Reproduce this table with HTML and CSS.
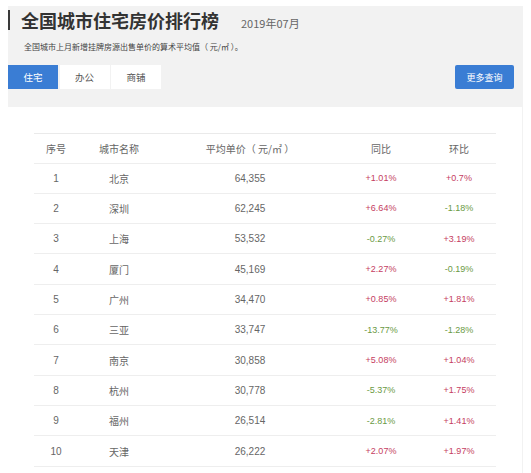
FILE: index.html
```html
<!DOCTYPE html>
<html lang="zh-CN">
<head>
<meta charset="utf-8">
<title>全国城市住宅房价排行榜</title>
<link rel="stylesheet" href="styles.css">
</head>
<body>
<div class="page">
  <div class="head">
    <h1 class="title">全国城市住宅房价排行榜</h1>
    <span class="date">2019年07月</span>
  </div>
  <p class="sub">全国城市上月新增挂牌房源出售单价的算术平均值（ 元/㎡ ）。</p>
  <div class="toolbar">
    <div class="tabs">
      <span class="tab active">住宅</span>
      <span class="tab">办公</span>
      <span class="tab">商铺</span>
    </div>
    <span class="more">更多查询</span>
  </div>
  <div class="card">
    <div class="table">
      <div class="row hdr"><span>序号</span><span>城市名称</span><span>平均单价（ 元/㎡ ）</span><span>同比</span><span>环比</span></div>
      <div class="row"><span class="num">1</span><span>北京</span><span class="num">64,355</span><span class="pct up">+1.01%</span><span class="pct up">+0.7%</span></div>
      <div class="row"><span class="num">2</span><span>深圳</span><span class="num">62,245</span><span class="pct up">+6.64%</span><span class="pct down">-1.18%</span></div>
      <div class="row"><span class="num">3</span><span>上海</span><span class="num">53,532</span><span class="pct down">-0.27%</span><span class="pct up">+3.19%</span></div>
      <div class="row"><span class="num">4</span><span>厦门</span><span class="num">45,169</span><span class="pct up">+2.27%</span><span class="pct down">-0.19%</span></div>
      <div class="row"><span class="num">5</span><span>广州</span><span class="num">34,470</span><span class="pct up">+0.85%</span><span class="pct up">+1.81%</span></div>
      <div class="row"><span class="num">6</span><span>三亚</span><span class="num">33,747</span><span class="pct down">-13.77%</span><span class="pct down">-1.28%</span></div>
      <div class="row"><span class="num">7</span><span>南京</span><span class="num">30,858</span><span class="pct up">+5.08%</span><span class="pct up">+1.04%</span></div>
      <div class="row"><span class="num">8</span><span>杭州</span><span class="num">30,778</span><span class="pct down">-5.37%</span><span class="pct up">+1.75%</span></div>
      <div class="row"><span class="num">9</span><span>福州</span><span class="num">26,514</span><span class="pct down">-2.81%</span><span class="pct up">+1.41%</span></div>
      <div class="row"><span class="num">10</span><span>天津</span><span class="num">26,222</span><span class="pct up">+2.07%</span><span class="pct up">+1.97%</span></div>
    </div>
  </div>
</div>
</body>
</html>
```
FILE: styles.css
```css
* { box-sizing: border-box; }
html, body { margin: 0; padding: 0; background: #fff; }
body {
  font-family: "Noto Sans CJK SC", "Liberation Sans", sans-serif;
  color: #333;
  overflow: hidden;
  height: 473px;
}
.page {
  margin: 6px 0 0 8px;
  width: 515px;
  height: 467px;
  background: #f2f2f2;
  padding-top: 4px;
  display: flex;
  flex-direction: column;
}
.head {
  display: flex;
  align-items: baseline;
  border-left: 2px solid #3a3a3a;
  height: 20px;
}
.title {
  margin: 0 0 0 11px;
  font-size: 18px;
  line-height: 20px;
  font-weight: 700;
  color: #333;
}
.date {
  margin-left: 22px;
  font-size: 11px;
  color: #666;
}
.sub {
  margin: 12px 0 0 16px;
  font-size: 8px;
  line-height: 10px;
  color: #444;
}
.toolbar {
  display: flex;
  justify-content: space-between;
  align-items: center;
  margin-top: 13px;
  padding-right: 9px;
  height: 24px;
}
.tabs { display: flex; gap: 1.5px; height: 24px; }
.tab {
  width: 50px;
  height: 24px;
  display: flex;
  align-items: center;
  justify-content: center;
  font-size: 9.5px;
  color: #555;
  background: #fff;
}
.tab.active { background: #3a7dd4; color: #fff; }
.more {
  width: 59px;
  height: 24px;
  display: flex;
  align-items: center;
  justify-content: center;
  font-size: 9px;
  color: #fff;
  background: #3a7dd4;
  border-radius: 2px;
}
.card {
  margin-top: 18px;
  margin-right: 1px;
  background: #fff;
  flex: 1;
  min-height: 0;
  padding: 26px 26px 0 26px;
}
.table {
  border-top: 1px solid #eaeaea;
}
.row {
  display: grid;
  grid-template-columns: 44px 82px 180px 82px 74px;
  height: 30.33px;
  border-bottom: 1px solid #eeeeee;
  align-items: center;
  font-size: 10px;
  color: #666;
}
.row.hdr { height: 29.5px; }
.row span { text-align: center; }
.num { font-family: "Liberation Sans", sans-serif; font-size: 10px; color: #666; }
.pct { font-family: "Liberation Sans", sans-serif; font-size: 9px; }
.up { color: #c53d62; }
.down { color: #6b9a44; }
```
